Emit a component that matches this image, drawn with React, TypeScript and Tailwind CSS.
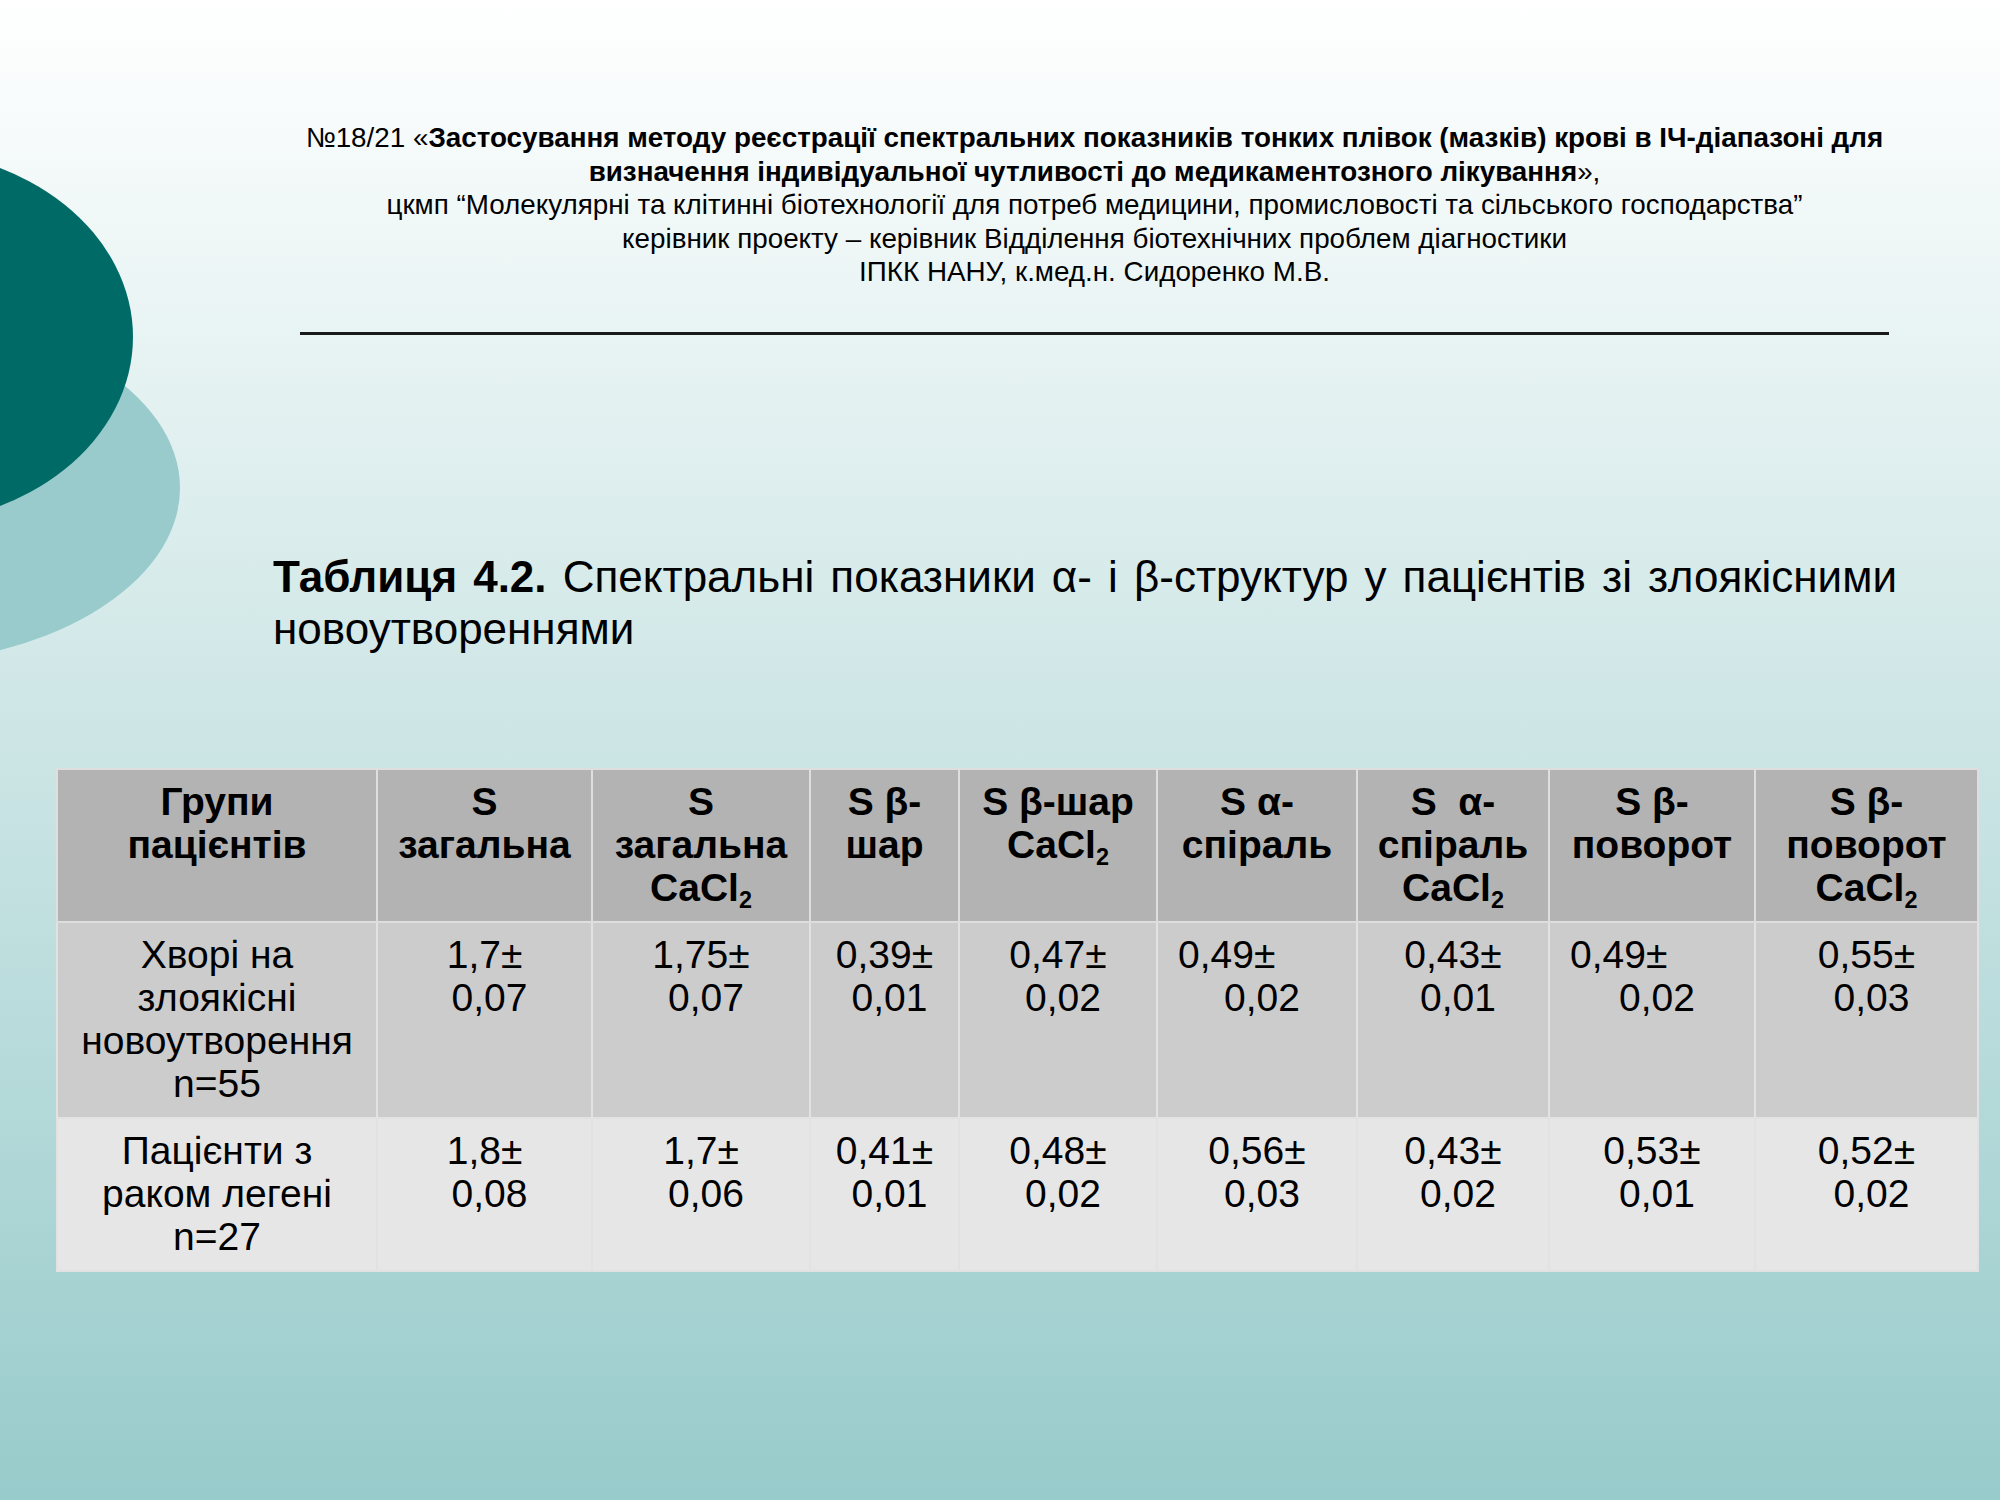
import React from 'react';

const font = { fontFamily: '"Liberation Sans", Arial, sans-serif' };

function CaCl() {
  return (
    <>
      CaCl<sub className="text-[0.6em] -bottom-[0.3em]">2</sub>
    </>
  );
}

const headers: React.ReactNode[] = [
  <>Групи<br />пацієнтів</>,
  <>S<br />загальна</>,
  <>S<br />загальна<br /><CaCl /></>,
  <>S β-<br />шар</>,
  <>S β-шар<br /><CaCl /></>,
  <>S α-<br />спіраль</>,
  <>S&nbsp; α-<br />спіраль<br /><CaCl /></>,
  <>S β-<br />поворот</>,
  <>S β-<br />поворот<br /><CaCl /></>,
];

const colWidths = [
  'w-[320px]',
  'w-[215px]',
  'w-[218px]',
  'w-[149px]',
  'w-[198px]',
  'w-[200px]',
  'w-[192px]',
  'w-[206px]',
  'w-[223px]',
];

type Val = { top: string; bottom: string; left?: boolean };

const rows: { group: string[]; bg: string; values: Val[] }[] = [
  {
    group: ['Хворі на', 'злоякісні', 'новоутворення', 'n=55'],
    bg: 'bg-[#cccccc]',
    values: [
      { top: '1,7±', bottom: '0,07' },
      { top: '1,75±', bottom: '0,07' },
      { top: '0,39±', bottom: '0,01' },
      { top: '0,47±', bottom: '0,02' },
      { top: '0,49±', bottom: '0,02', left: true },
      { top: '0,43±', bottom: '0,01' },
      { top: '0,49±', bottom: '0,02', left: true },
      { top: '0,55±', bottom: '0,03' },
    ],
  },
  {
    group: ['Пацієнти з', 'раком легені', 'n=27'],
    bg: 'bg-[#e6e6e6]',
    values: [
      { top: '1,8±', bottom: '0,08' },
      { top: '1,7±', bottom: '0,06' },
      { top: '0,41±', bottom: '0,01' },
      { top: '0,48±', bottom: '0,02' },
      { top: '0,56±', bottom: '0,03' },
      { top: '0,43±', bottom: '0,02' },
      { top: '0,53±', bottom: '0,01' },
      { top: '0,52±', bottom: '0,02' },
    ],
  },
];

export default function App() {
  return (
    <div
      className="relative w-[2000px] h-[1500px] overflow-hidden bg-linear-to-b from-white to-[#98cbcb] text-black"
      style={font}
    >
      {/* Decorative ovals on the left edge */}
      <svg className="absolute left-0 top-0 pointer-events-none" width="400" height="700" viewBox="0 0 400 700">
        <ellipse cx="-120" cy="488" rx="300" ry="177" fill="#99cbcc" />
        <ellipse cx="-100" cy="337" rx="233" ry="187" fill="#006a66" />
      </svg>

      <div className="relative">
        {/* Project header */}
        <div className="ml-[300px] w-[1589px] pt-[121px]">
          <div className="text-center text-[27.8px] leading-[33.5px]">
            №18/21 «<b>Застосування методу реєстрації спектральних показників тонких плівок (мазків) крові в ІЧ-діапазоні для</b>
            <br />
            <b>визначення індивідуальної чутливості до медикаментозного лікування</b>»,
            <br />
            цкмп “Молекулярні та клітинні біотехнології для потреб медицини, промисловості та сільського господарства”
            <br />
            керівник проекту – керівник Відділення біотехнічних проблем діагностики
            <br />
            ІПКК НАНУ, к.мед.н. Сидоренко М.В.
          </div>
          <div className="mt-[43px] h-[3px] bg-[#1a1a1a]" />
        </div>

        {/* Table caption */}
        <div className="ml-[273px] w-[1624px] mt-[216px] text-[44px] leading-[52px]">
          <div className="text-justify [text-align-last:justify]">
            <b>Таблиця 4.2.</b> Спектральні показники α- і β-структур у пацієнтів зі злоякісними
          </div>
          <div>новоутвореннями</div>
        </div>

        {/* Data table */}
        <table className="ml-[56px] mt-[113px] w-[1921px] table-fixed border-collapse text-[39px] leading-[43px]">
          <colgroup>
            {colWidths.map((w, i) => (
              <col key={i} className={w} />
            ))}
          </colgroup>
          <thead>
            <tr className="bg-[#b3b3b3]">
              {headers.map((h, i) => (
                <th
                  key={i}
                  className="border-2 border-[#dedede] align-top text-center font-bold pt-[10px] pb-[12px] px-1"
                >
                  {h}
                </th>
              ))}
            </tr>
          </thead>
          <tbody>
            {rows.map((r, ri) => (
              <tr key={ri} className={r.bg}>
                <td className="border-2 border-[#e2e2e2] align-top text-center pt-[10px] pb-[12px] px-1">
                  {r.group.map((g, gi) => (
                    <div key={gi}>{g}</div>
                  ))}
                </td>
                {r.values.map((v, vi) => (
                  <td key={vi} className="border-2 border-[#e2e2e2] align-top pt-[10px] pb-[12px] px-1">
                    {v.left ? (
                      <>
                        <div className="pl-[16px] text-left">{v.top}</div>
                        <div className="pl-[10px] text-center">{v.bottom}</div>
                      </>
                    ) : (
                      <>
                        <div className="text-center">{v.top}</div>
                        <div className="pl-[10px] text-center">{v.bottom}</div>
                      </>
                    )}
                  </td>
                ))}
              </tr>
            ))}
          </tbody>
        </table>
      </div>
    </div>
  );
}
